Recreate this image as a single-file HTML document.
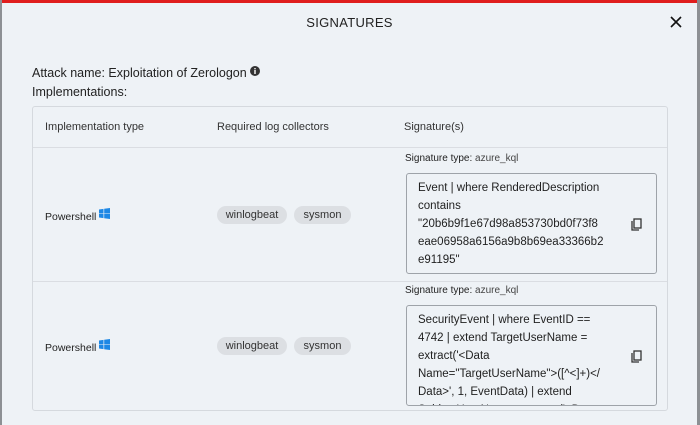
<!DOCTYPE html>
<html><head><style>
*{margin:0;padding:0;box-sizing:border-box}
body{width:700px;height:425px;overflow:hidden;background:#8d9094;font-family:"Liberation Sans",sans-serif;color:#222;position:relative}
.modal{position:absolute;left:2px;top:0;width:695px;height:425px;background:#eef2f6;border-top:3px solid #e01e1e;overflow:hidden}
.title{position:absolute;left:0;right:0;top:12px;text-align:center;font-size:13px;letter-spacing:.3px;color:#222}
.x{position:absolute;left:668px;top:13px}
.t{position:absolute;font-size:12.5px}
.tbl{position:absolute;left:30px;top:103px;width:636px;height:305px;border:1px solid #d5d9de;border-radius:3px}
.hr{position:absolute;left:0;right:0;height:1px;background:#dadde2}
.h{position:absolute;font-size:11px;color:#333;top:14px}
.chip{position:absolute;height:18px;border-radius:9px;background:#dcdfe3;font-size:11px;line-height:18px;text-align:center;color:#333}
.code{position:absolute;left:373px;width:251px;height:101px;border:1px solid #9ea3a9;border-radius:3px;overflow:hidden;font-size:11.5px;line-height:18px;padding:5px 30px 0 11px;color:#222;white-space:nowrap}
.cp{position:absolute;right:14px;top:44px}
.st{position:absolute;left:372px;font-size:10px;color:#222}
.st span{color:#444}
</style></head><body>
<div class="modal">
<div class="title">SIGNATURES</div>
<svg class="x" width="12" height="12" viewBox="0 0 12 12"><path d="M1 1L11 11M11 1L1 11" stroke="#111" stroke-width="1.6"/></svg>
<div class="t" style="left:30px;top:63px">Attack name: Exploitation of Zerologon <svg width="10" height="10" viewBox="0 0 10 10" style="vertical-align:1px"><circle cx="5" cy="5" r="5" fill="#333"/><rect x="4.3" y="4" width="1.4" height="4" fill="#fff"/><rect x="4.3" y="2" width="1.4" height="1.3" fill="#fff"/></svg></div>
<div class="t" style="left:30px;top:82px">Implementations:</div>
<div class="tbl">
<div class="h" style="left:12px">Implementation type</div>
<div class="h" style="left:184px">Required log collectors</div>
<div class="h" style="left:371px">Signature(s)</div>
<div class="hr" style="top:40px"></div>
<div class="hr" style="top:174px"></div>

<div class="t" style="left:12px;top:101px;font-size:10.5px">Powershell <svg width="11" height="11" viewBox="0 0 11 11" style="vertical-align:1px"><path d="M0 1.5L4.5 .9V5.2H0ZM5.2 .8L11 0V5.2H5.2ZM0 5.8H4.5V10.1L0 9.5ZM5.2 5.8H11V11L5.2 10.2Z" fill="#1e88e5"/></svg></div>
<div class="chip" style="left:184px;top:99px;width:70px">winlogbeat</div>
<div class="chip" style="left:261px;top:99px;width:57px">sysmon</div>
<div class="st" style="top:46px">Signature type: <span>azure_kql</span></div>
<div class="code" style="top:66px">Event | where RenderedDescription<br>contains<br>"20b6b9f1e67d98a853730bd0f73f8<br>eae06958a6156a9b8b69ea33366b2<br>e91195"
<svg class="cp" width="11" height="13" viewBox="0 0 11 13"><path d="M1 3V12H8" fill="none" stroke="#333" stroke-width="1.3"/><rect x="3" y="1" width="7" height="9" fill="none" stroke="#333" stroke-width="1.3"/></svg></div>

<div class="t" style="left:12px;top:232px;font-size:10.5px">Powershell <svg width="11" height="11" viewBox="0 0 11 11" style="vertical-align:1px"><path d="M0 1.5L4.5 .9V5.2H0ZM5.2 .8L11 0V5.2H5.2ZM0 5.8H4.5V10.1L0 9.5ZM5.2 5.8H11V11L5.2 10.2Z" fill="#1e88e5"/></svg></div>
<div class="chip" style="left:184px;top:230px;width:70px">winlogbeat</div>
<div class="chip" style="left:261px;top:230px;width:57px">sysmon</div>
<div class="st" style="top:178px">Signature type: <span>azure_kql</span></div>
<div class="code" style="top:198px">SecurityEvent | where EventID ==<br>4742 | extend TargetUserName =<br>extract('&lt;Data<br>Name="TargetUserName"&gt;([^&lt;]+)&lt;/<br>Data&gt;', 1, EventData) | extend<br>SubjectUserName = extract('&lt;Data
<svg class="cp" width="11" height="13" viewBox="0 0 11 13"><path d="M1 3V12H8" fill="none" stroke="#333" stroke-width="1.3"/><rect x="3" y="1" width="7" height="9" fill="none" stroke="#333" stroke-width="1.3"/></svg></div>
</div>
</div>
</body></html>
